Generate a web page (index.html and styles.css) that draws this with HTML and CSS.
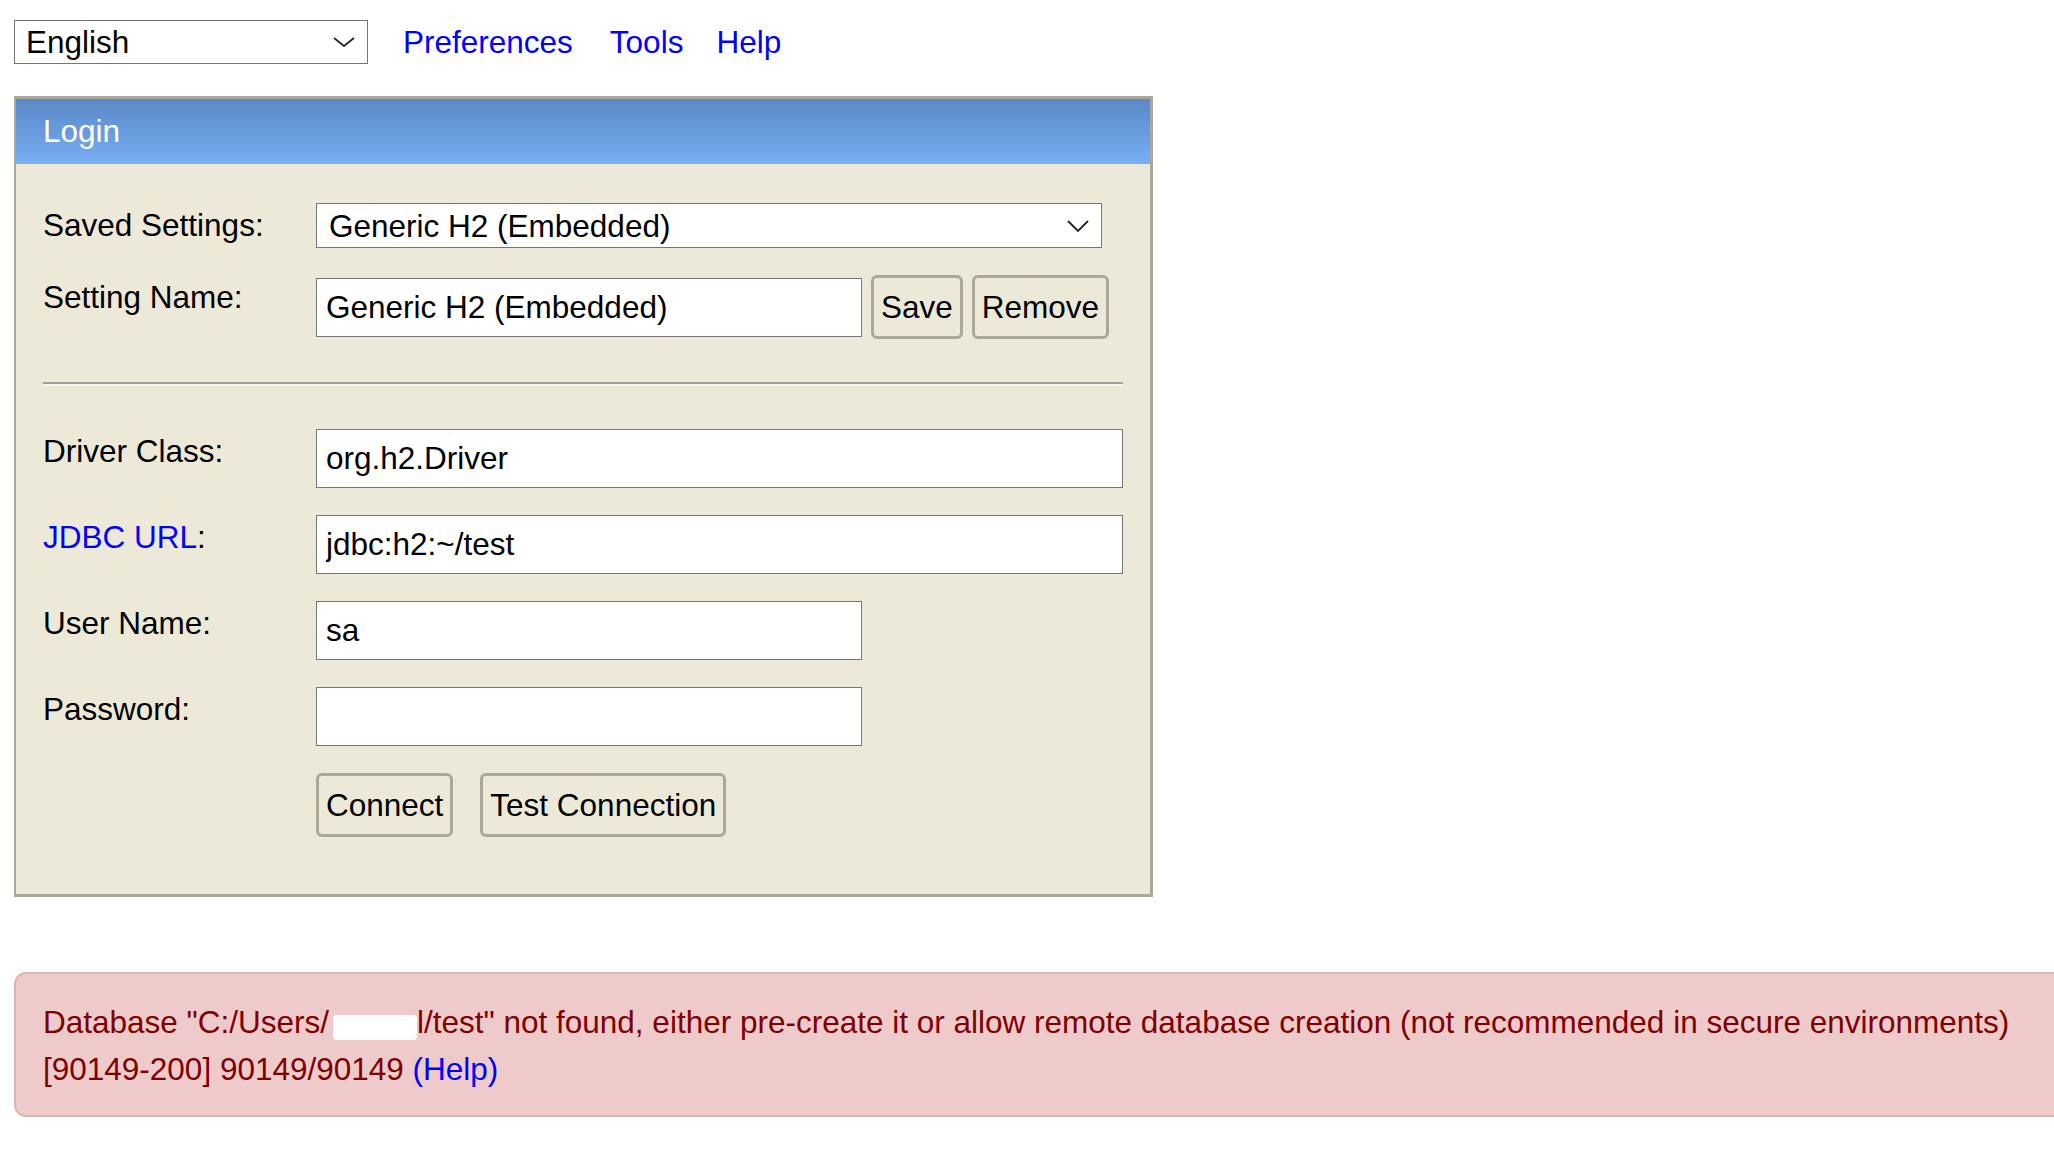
FILE: index.html
```html
<!DOCTYPE html>
<html lang="en">
<head>
<meta charset="utf-8">
<title>H2 Console</title>
<link rel="stylesheet" href="styles.css">
</head>
<body>
<div class="topbar">
  <div class="select-wrap lang">
    <select class="select lang-select"><option>English</option></select>
    <svg class="chev chev-lang" viewBox="0 0 22 10" width="22" height="10"><polyline points="1,1 11,9 21,1" fill="none" stroke="#222" stroke-width="1.8"/></svg>
  </div>
  <a href="#" class="navlink nav-pref">Preferences</a>
  <a href="#" class="navlink nav-tools">Tools</a>
  <a href="#" class="navlink nav-help">Help</a>
</div>

<div class="login">
  <div class="login-head">Login</div>
  <div class="form">
    <div class="label">Saved Settings:</div>
    <div class="control">
      <div class="select-wrap">
        <select class="select saved-select"><option>Generic H2 (Embedded)</option></select>
        <svg class="chev chev-saved" viewBox="0 0 22 12" width="22" height="12"><polyline points="1,1 11,11 21,1" fill="none" stroke="#222" stroke-width="1.8"/></svg>
      </div>
    </div>

    <div class="label">Setting Name:</div>
    <div class="control row-inline">
      <input class="text short" type="text" value="Generic H2 (Embedded)">
      <button class="btn" type="button">Save</button>
      <button class="btn" type="button">Remove</button>
    </div>

    <hr class="sep">

    <div class="label">Driver Class:</div>
    <div class="control"><input class="text long" type="text" value="org.h2.Driver"></div>

    <div class="label"><a href="#" class="link">JDBC URL</a>:</div>
    <div class="control"><input class="text long" type="text" value="jdbc:h2:~/test"></div>

    <div class="label">User Name:</div>
    <div class="control"><input class="text short" type="text" value="sa"></div>

    <div class="label">Password:</div>
    <div class="control"><input class="text short" type="password" value=""></div>

    <div class="label"></div>
    <div class="control row-buttons">
      <button class="btn" type="submit">Connect</button>
      <button class="btn" type="button">Test Connection</button>
    </div>
  </div>
</div>

<div class="error">Database "C:/Users/<span class="redact"></span>l/test" not found, either pre-create it or allow remote database creation (not recommended in secure environments)<br>[90149-200] 90149/90149 <a href="#" class="link">(Help)</a></div>
</body>
</html>
```

FILE: styles.css
```css
html, body {
  overflow: hidden;
}

body {
  margin: 0;
  padding: 20px 0 0 14px;
  background: #ffffff;
  color: #000000;
  font-family: "Liberation Sans", Arial, sans-serif;
  font-size: 31.5px;
}

.topbar {
  display: flex;
  align-items: center;
  height: 44px;
}

.select-wrap {
  position: relative;
  display: inline-block;
}

.select {
  appearance: none;
  -webkit-appearance: none;
  box-sizing: border-box;
  border: 1px solid #767676;
  border-radius: 0;
  background: #ffffff;
  color: #000000;
  font: inherit;
  padding: 0 11px;
  margin: 0;
  display: block;
}

.lang-select {
  width: 354px;
  height: 44px;
}

.saved-select {
  width: 786px;
  height: 45px;
  padding-left: 12px;
}

.chev {
  position: absolute;
  right: 13px;
  top: 50%;
  transform: translateY(-50%);
  pointer-events: none;
}

.navlink {
  color: #0000ff;
  text-decoration: none;
}

.nav-pref { margin-left: 35px; }
.nav-tools { margin-left: 37px; }
.nav-help { margin-left: 33px; }

.login {
  box-sizing: border-box;
  width: 1139px;
  margin-top: 32px;
  border: 3px solid #aca899;
  border-left-width: 2px;
  background: #ece9d8;
}

.login-head {
  height: 65px;
  display: flex;
  align-items: center;
  padding-left: 27px;
  color: #ffffff;
  background: linear-gradient(#5a87c7, #77aff2);
}

.form {
  display: grid;
  grid-template-columns: 273px 807px;
  row-gap: 27px;
  align-items: start;
  padding: 39px 27px 57px 27px;
}

.label {
  padding-top: 4px;
  white-space: nowrap;
}

.control {
  display: flex;
  align-items: center;
}

.row-inline {
  gap: 9px;
}

.row-buttons {
  gap: 27px;
}

.text {
  box-sizing: border-box;
  height: 59px;
  border: 1px solid #767676;
  border-radius: 0;
  background: #ffffff;
  color: #000000;
  font: inherit;
  padding: 0 9px;
  margin: 0;
}

.text.short { width: 546px; }
.text.long { width: 807px; }

.btn {
  box-sizing: border-box;
  height: 64px;
  border: 3px solid #aca899;
  border-radius: 6px;
  background: #ece9d8;
  color: #000000;
  font: inherit;
  padding: 0 7px;
  margin: 0;
}

.sep {
  grid-column: 1 / span 2;
  height: 0;
  margin: 16px 0 16px 0;
  border: none;
  border-top: 2px solid #a09f9a;
  border-bottom: 2px solid #f6f5f0;
}

.link {
  color: #0000ff;
  text-decoration: none;
}

.error {
  box-sizing: border-box;
  width: 2100px;
  margin-top: 75px;
  padding: 25px 0 22px 27px;
  border: 2px solid #dcb5b5;
  border-radius: 12px;
  background: #eecaca;
  color: #800000;
  line-height: 47px;
  white-space: nowrap;
}

.redact {
  display: inline-block;
  width: 84px;
  height: 25px;
  vertical-align: -7px;
  background: #ffffff;
  border-radius: 4px;
  margin-left: 4px;
}
```
